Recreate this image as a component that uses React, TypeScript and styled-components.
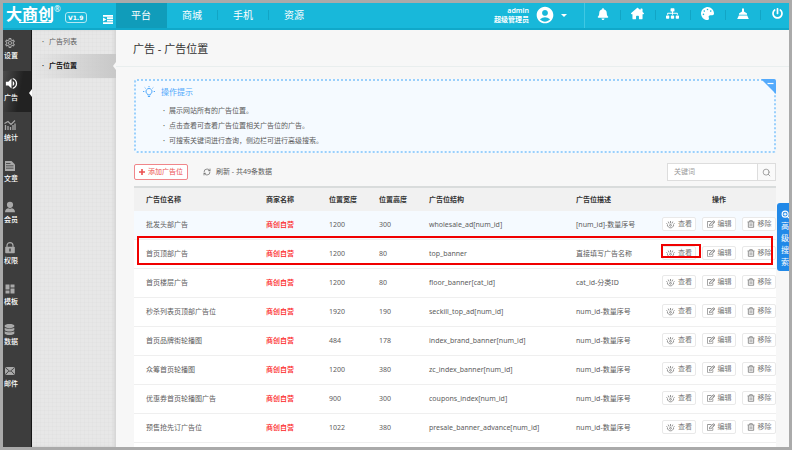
import React from "react";
import styled, { createGlobalStyle, css } from "styled-components";
import { FaBell, FaDatabase, FaPalette, FaPowerOff, FaRegEdit, FaSitemap } from "react-icons/fa";
import { FaHouseChimney } from "react-icons/fa6";
import { MdAccountCircle, MdDashboard, MdOutlineSettings, MdVolumeUp } from "react-icons/md";
import { RefreshCw, Search, ZoomIn } from "lucide-react";

const GlobalStyle = createGlobalStyle`
  *, *::before, *::after { box-sizing: border-box; }
  body {
    margin: 0;
    font-family: "Noto Sans", "Noto Sans CJK SC", sans-serif;
    font-size: 7px;
    line-height: 10px;
    color: #5c5c5c;
  }
  button, input { font: inherit; color: inherit; margin: 0; }
  button { padding: 0; border: 0; background: none; cursor: pointer; }
  a { color: inherit; text-decoration: none; }
  svg { display: block; flex: none; }
  ul { list-style: none; margin: 0; padding: 0; }
`;

const Frame = styled.div`
  display: flex;
  flex-direction: column;
  height: 100vh;
  overflow: hidden;
  border: 3px solid #aaaaaa;
  background: #f7f7f7;
`;

const Header = styled.header`
  display: flex;
  flex: none;
  height: 27px;
  overflow: hidden;
  color: #fff;
  background: #18b8da;
  border-bottom: 2px solid #10a8c9;
`;

const Brand = styled.div`
  display: flex;
  position: relative;
  width: 113px;
  padding: 0 3px;
`;

const LogoText = styled.span`
  font-size: 16px;
  line-height: 22px;
  font-weight: 700;
`;

const LogoStroke = styled.svg`
  position: absolute;
  left: 0;
  top: 0;
`;

const Registered = styled.sup`
  margin-top: 1px;
  font-size: 8px;
  line-height: 10px;
  vertical-align: baseline;
`;

const Version = styled.span`
  align-self: flex-start;
  margin: 9px 0 0 4px;
  width: 22px;
  height: 11px;
  border: 1px solid #b4e8f3;
  border-radius: 3px;
  font: bold 6px/9px "DejaVu Sans", sans-serif;
  text-align: center;
`;

const CollapseButton = styled.button`
  align-self: flex-end;
  margin: 0 0 4px auto;
`;

const Tabs = styled.nav`
  display: flex;
`;

const Tab = styled.a<{ $active?: boolean }>`
  width: 51px;
  padding-right: 1px;
  font-size: 10px;
  line-height: 24px;
  text-align: center;
  background: ${(p) => (p.$active ? "#109cba" : "transparent")};
  &:not(:first-child):not(:last-child) {
    background: linear-gradient(#12a5c5, #12a5c5) right 7px / 1px 10px no-repeat;
  }
`;

const Account = styled.button`
  display: flex;
  align-items: center;
  gap: 6px;
  margin-left: auto;
  padding: 0 17px 1px 0;
`;

const AccountName = styled.span`
  display: flex;
  flex-direction: column;
  text-align: right;
  line-height: 9px;
  font-weight: 600;
`;

const Tools = styled.div`
  display: flex;
  margin-right: -6px;
  border-left: 1px solid #3fc8e3;
`;

const Tool = styled.button`
  display: grid;
  place-items: center;
  width: 35px;
  padding-bottom: 4px;
  & + & {
    background: linear-gradient(#12a5c5, #12a5c5) left 7px / 1px 10px no-repeat;
  }
`;

const Body = styled.div`
  display: flex;
  flex: 1;
  min-height: 0;
`;

const SideNav = styled.nav`
  flex: none;
  width: 29px;
  background: #3d3d3d;
  border-right: 1px solid #161616;
`;

const SideLink = styled.a<{ $active?: boolean }>`
  display: flex;
  flex-direction: column;
  gap: 2px;
  position: relative;
  height: 41px;
  padding: 7px 0 0 1px;
  color: #fff;
  font-weight: 500;
  svg { color: ${(p) => (p.$active ? "#fff" : "#a9a9a9")}; }
  ${(p) =>
    p.$active &&
    css`
      padding-top: 5px;
      background: linear-gradient(100deg, #4a4a4a, #222 60%);
      &::after {
        content: "";
        position: absolute;
        right: -1px;
        top: 18px;
        border: 4px solid transparent;
        border-left-width: 0;
        border-right: 3px solid #fff;
      }
    `}
`;

const SubNav = styled.nav`
  flex: none;
  width: 84px;
  box-shadow: inset -2px 0 3px #d4d4d4;
  background:
    repeating-linear-gradient(90deg, #d8d8d833 0 1px, transparent 1px 4px),
    repeating-linear-gradient(#d8d8d833 0 1px, transparent 1px 4px),
    #e7e7e7;
`;

const SubLink = styled.a<{ $active?: boolean }>`
  display: flex;
  align-items: center;
  position: relative;
  height: 24px;
  padding-left: 10px;
  &::before { content: "·"; width: 7px; font-weight: 700; }
  ${(p) =>
    p.$active &&
    css`
      color: #111;
      font-weight: 700;
      background: linear-gradient(90deg, transparent, #c8c8c8);
      &::after {
        content: "";
        position: absolute;
        right: 0;
        border: 4px solid transparent;
        border-left-width: 0;
        border-right: 3px solid #f7f7f7;
      }
    `}
`;

const Main = styled.main`
  display: flex;
  flex-direction: column;
  flex: 1;
  min-width: 0;
  position: relative;
`;

const Title = styled.h1`
  margin: 0;
  padding: 1px 17px 0;
  border-bottom: 1px solid #e9eeee;
  color: #333;
  font-size: 11px;
  line-height: 35px;
  font-weight: 400;
`;

const Content = styled.div`
  display: flex;
  flex-direction: column;
  flex: 1;
  min-height: 0;
  padding: 12px 13px 0 18px;
`;

const Hint = styled.section`
  position: relative;
  padding: 4px 0 3px 7px;
  border: 2px dotted #9bd0fb;
  border-radius: 3px;
  background: #f5faff;
`;

const HintTitle = styled.h2`
  display: flex;
  align-items: center;
  gap: 6px;
  margin: 0 0 4px;
  color: #4fa8fb;
  font-size: 8px;
  line-height: 14px;
  font-weight: 400;
`;

const HintItem = styled.li`
  display: flex;
  padding-left: 20px;
  line-height: 15px;
  &::before { content: "·"; width: 6px; font-weight: 700; }
`;

const FoldButton = styled.button`
  position: absolute;
  right: -2px;
  top: -2px;
`;

const Toolbar = styled.div`
  display: flex;
  align-items: center;
  gap: 15px;
  margin: 10px 0 5px;
`;

const AddButton = styled.button`
  display: flex;
  align-items: center;
  justify-content: center;
  gap: 3px;
  width: 54px;
  height: 16px;
  border: 1px solid #f0868a;
  border-radius: 2px;
  background: #fff;
  color: #ec5151;
`;

const RefreshButton = styled.button`
  display: flex;
  align-items: center;
  gap: 5px;
`;

const SearchBox = styled.form`
  display: flex;
  width: 109px;
  height: 18px;
  margin-left: auto;
  border: 1px solid #ddd;
  background: #fff;
`;

const SearchInput = styled.input`
  flex: 1;
  min-width: 0;
  padding: 0 6px;
  border: 0;
  background: none;
  &::placeholder { color: #999; }
`;

const SearchButton = styled.button`
  display: grid;
  place-items: center;
  width: 18px;
  border-left: 1px solid #ddd;
  background: #fafafa;
  color: #888;
`;

const TableArea = styled.div`
  flex: 1;
  position: relative;
  background: #fff;
`;

const Table = styled.table`
  width: 100%;
  table-layout: fixed;
  border-collapse: separate;
  border-spacing: 0;
  border-top: 2px solid #d9dcdc;
`;

const Col = styled.col<{ $width?: number }>`
  width: ${(p) => (p.$width ? `${p.$width}px` : "auto")};
`;

const HeadCell = styled.th<{ $center?: boolean }>`
  height: 23px;
  padding: 0 0 0 ${(p) => (p.$center ? 0 : 12)}px;
  background: #f1f1f1;
  color: #333;
  font-weight: 700;
  text-align: ${(p) => (p.$center ? "center" : "left")};
`;

const Row = styled.tr<{ $hover?: boolean }>`
  background: ${(p) => (p.$hover ? "#f5faff" : "#fff")};
`;

const Cell = styled.td<{ $seller?: boolean }>`
  height: 29px;
  padding: 0 0 0 12px;
  border-bottom: 1px solid #efefef;
  white-space: nowrap;
  color: ${(p) => (p.$seller ? "#fc1c1c" : "#5c5c5c")};
  font-weight: ${(p) => (p.$seller ? 500 : 400)};
`;

const ActionCell = styled(Cell)`
  padding: 0;
`;

const Actions = styled.div`
  display: flex;
  gap: 6px;
  margin-top: -2px;
`;

const ActionButton = styled.button`
  display: flex;
  align-items: center;
  justify-content: center;
  gap: 3px;
  width: 34px;
  height: 14px;
  border: 1px solid #e9e9e9;
  border-radius: 2px;
  background: #fff;
  color: #777;
`;

const Mark = styled.div<{ $inner?: boolean }>`
  position: absolute;
  border: 2px solid #f00000;
  pointer-events: none;
  ${(p) =>
    p.$inner
      ? css`top: 58px; right: 75px; width: 40px; height: 14px;`
      : css`top: 50px; left: 3px; right: 3px; height: 29px;`}
`;

const AdvancedSearch = styled.button`
  display: flex;
  flex-direction: column;
  gap: 1px;
  position: absolute;
  right: 0;
  top: 173px;
  width: 12px;
  padding: 7px 0 4px 4px;
  border-radius: 3px 0 0 3px;
  background: #2189e8;
  color: #fff;
  font-size: 8px;
  line-height: 11px;
  overflow: hidden;
`;

const StatsIcon = () => (
  <svg width="12" height="12" viewBox="0 0 12 12" fill="none" stroke="currentColor">
    <path d="M1.5 6v5M4 7v4M6.500 8v3M9 6v5M11 4.500V11" strokeWidth="1.300" />
    <path d="M.5 4.500L4 2.500l3 3L11 1.500" strokeWidth="1.100" />
  </svg>
);
const ArticleIcon = () => (
  <svg width="12" height="12" viewBox="0 0 12 12">
    <path fill="currentColor" d="M1 1h6.500L11 4.500V11H1z" />
    <path stroke="#3d3d3d" strokeWidth=".8" d="M2 3.500h4.500M2 5.800h7.500M2 8.200h7.500" fill="none" />
  </svg>
);
const MemberIcon = () => (
  <svg width="12" height="12" viewBox="0 0 12 12" fill="currentColor">
    <path d="M6 .8c2 0 3.100 1.300 3.100 3S8 7.200 6 7.200 2.900 5.500 2.900 3.800 4 .8 6 .8zM1 11.200c0-2.500 1.700-3.900 3.500-4 .9.700 2.100.7 3 0 1.800.1 3.500 1.500 3.500 4z" />
  </svg>
);
const LockIcon = () => (
  <svg width="12" height="12" viewBox="0 0 12 12">
    <path d="M3 5V3.600a3 3 0 0 1 6 0V5" fill="none" stroke="currentColor" strokeWidth="1.200" />
    <rect x="1.200" y="4.800" width="9.600" height="6.500" rx=".8" fill="currentColor" />
    <path d="M6 6.500v3" stroke="#333" strokeWidth="1.300" />
  </svg>
);
const MailIcon = () => (
  <svg width="12" height="12" viewBox="0 0 12 12">
    <rect x="1" y="2" width="10" height="8" rx="2" fill="currentColor" />
    <path d="M2 3.200l4 3.300 4-3.300M2 9l2.800-3M10 9L7.200 6" fill="none" stroke="#3d3d3d" strokeWidth=".9" />
  </svg>
);
const CollapseIcon = () => (
  <svg width="10" height="9" viewBox="0 0 10 9">
    <path d="M0 .8h10M4 3.200H10M4 5.700H10M0 8.200h10" stroke="#fff" strokeWidth="1.800" />
    <path d="M0 2.400l3.500 2.100L0 6.600z" fill="#fff" />
  </svg>
);
const BroomIcon = () => (
  <svg width="12" height="12" viewBox="0 0 12 12" fill="#fff">
    <path d="M5 .5h2v3l3 2v1.300H2V5.500l3-2zM1.800 7.400h8.400L11.800 11H.2z" />
  </svg>
);
const BulbIcon = () => (
  <svg width="12" height="12" viewBox="0 0 12 12" fill="none" stroke="#4fa8fb" strokeWidth="1">
    <path d="M4.700 8.900V8.200a3 3 0 1 1 2.600 0v.7zM4.900 10.500h2.200M6 0v1.200M0 5.500h1.300M10.700 5.500H12M1.700 1.500l.9.900M10.300 1.500l-.9.900" />
  </svg>
);
const FoldIcon = () => (
  <svg width="15" height="15" viewBox="0 0 15 15">
    <path d="M0 0h13a2 2 0 0 1 2 2v13z" fill="#54aafc" />
    <path d="M6.500 4.500h6" stroke="#fff" strokeWidth="1.200" />
  </svg>
);
const PlusIcon = () => (
  <svg width="6" height="6" viewBox="0 0 6 6">
    <path d="M3 0v6M0 3h6" stroke="currentColor" strokeWidth="1.600" />
  </svg>
);
const ViewIcon = () => (
  <svg width="9" height="9" viewBox="0 0 9 9" fill="none" stroke="currentColor" strokeWidth=".8">
    <path d="M1.200 5C2 7 3 7.800 4.500 7.800S7 7 7.800 5M4.500 1v2.200M2.200 1.600l.9 1.900M6.800 1.600l-.9 1.900M.4 3.400l1.400 1.100M8.600 3.400L7.200 4.500" />
    <circle cx="4.500" cy="5.300" r=".9" />
  </svg>
);
const TrashIcon = () => (
  <svg width="8" height="8" viewBox="0 0 9 9" fill="none" stroke="currentColor" strokeWidth=".9">
    <path d="M.6 2.200h7.800M3 2V.8h3V2M1.500 2.400v5.800h6V2.400M3.500 3.700v3.200M5.500 3.700v3.200" />
  </svg>
);

const sideItems = [
  { label: "设置", icon: <MdOutlineSettings size={12} /> },
  { label: "广告", icon: <MdVolumeUp size={15} />, active: true },
  { label: "统计", icon: <StatsIcon /> },
  { label: "文章", icon: <ArticleIcon /> },
  { label: "会员", icon: <MemberIcon /> },
  { label: "权限", icon: <LockIcon /> },
  { label: "模板", icon: <MdDashboard size={12} /> },
  { label: "数据", icon: <FaDatabase size={11} /> },
  { label: "邮件", icon: <MailIcon /> },
];

const tools = [
  { label: "消息", icon: <FaBell size={12} /> },
  { label: "首页", icon: <FaHouseChimney size={13} /> },
  { label: "站点地图", icon: <FaSitemap size={13} /> },
  { label: "主题", icon: <FaPalette size={13} /> },
  { label: "清除缓存", icon: <BroomIcon /> },
  { label: "退出", icon: <FaPowerOff size={11} /> },
];

const hints = [
  "展示网站所有的广告位置。",
  "点击查看可查看广告位置相关广告位的广告。",
  "可搜索关键词进行查询，侧边栏可进行高级搜索。",
];

const columns = [
  { label: "广告位名称", width: 120 },
  { label: "商家名称", width: 63 },
  { label: "位置宽度", width: 50 },
  { label: "位置高度", width: 50 },
  { label: "广告位结构", width: 147 },
  { label: "广告位描述" },
  { label: "操作", width: 114 },
];

const rows = [
  ["批发头部广告", 1200, 300, "wholesale_ad[num_id]", "[num_id]-数量序号"],
  ["首页顶部广告", 1200, 80, "top_banner", "直接填写广告名称"],
  ["首页楼层广告", 1200, 80, "floor_banner[cat_id]", "cat_id-分类ID"],
  ["秒杀列表页顶部广告位", 1920, 190, "seckill_top_ad[num_id]", "num_id-数量序号"],
  ["首页品牌街轮播图", 484, 178, "index_brand_banner[num_id]", "num_id-数量序号"],
  ["众筹首页轮播图", 1200, 380, "zc_index_banner[num_id]", "num_id-数量序号"],
  ["优惠券首页轮播图广告", 900, 300, "coupons_index[num_id]", "num_id-数量序号"],
  ["预售抢先订广告位", 1022, 380, "presale_banner_advance[num_id]", "num_id-数量序号"],
];

export default function App() {
  return (
    <>
      <GlobalStyle />
      <Frame>
        <Header>
          <Brand>
            <LogoText>大商创</LogoText>
            <LogoStroke width="52" height="22" viewBox="0 0 52 22" fill="none" stroke="#fff" strokeWidth="1.200">
              <path d="M16 19.500h31q2 0 2-2V15" />
            </LogoStroke>
            <Registered>®</Registered>
            <Version>V1.9</Version>
            <CollapseButton aria-label="收起菜单"><CollapseIcon /></CollapseButton>
          </Brand>
          <Tabs>
            {["平台", "商城", "手机", "资源"].map((t, i) => (
              <Tab href="#" key={t} $active={i === 0}>{t}</Tab>
            ))}
          </Tabs>
          <Account>
            <AccountName>
              <span>admin</span>
              <span>超级管理员</span>
            </AccountName>
            <MdAccountCircle size={20} />
            <svg width="6" height="3" viewBox="0 0 6 3"><path d="M0 0h6L3 3z" fill="#fff" /></svg>
          </Account>
          <Tools>
            {tools.map((t) => (
              <Tool key={t.label} aria-label={t.label}>{t.icon}</Tool>
            ))}
          </Tools>
        </Header>
        <Body>
          <SideNav>
            {sideItems.map((s) => (
              <SideLink href="#" key={s.label} $active={s.active}>
                {s.icon}
                {s.label}
              </SideLink>
            ))}
          </SideNav>
          <SubNav>
            <SubLink href="#">广告列表</SubLink>
            <SubLink href="#" $active>广告位置</SubLink>
          </SubNav>
          <Main>
            <Title>广告 - 广告位置</Title>
            <Content>
              <Hint>
                <HintTitle><BulbIcon />操作提示</HintTitle>
                <ul>
                  {hints.map((h) => <HintItem key={h}>{h}</HintItem>)}
                </ul>
                <FoldButton aria-label="收起提示"><FoldIcon /></FoldButton>
              </Hint>
              <Toolbar>
                <AddButton><PlusIcon />添加广告位</AddButton>
                <RefreshButton><RefreshCw size={8} />刷新 - 共49条数据</RefreshButton>
                <SearchBox>
                  <SearchInput placeholder="关键词" aria-label="关键词" />
                  <SearchButton type="button" aria-label="搜索"><Search size={9} /></SearchButton>
                </SearchBox>
              </Toolbar>
              <TableArea>
                <Table>
                  <colgroup>
                    {columns.map((c) => <Col key={c.label} $width={c.width} />)}
                  </colgroup>
                  <thead>
                    <tr>
                      {columns.map((c) => (
                        <HeadCell key={c.label} $center={c.label === "操作"}>{c.label}</HeadCell>
                      ))}
                    </tr>
                  </thead>
                  <tbody>
                    {rows.map(([name, w, h, code, desc], i) => (
                      <Row key={name} $hover={i === 0}>
                        <Cell>{name}</Cell>
                        <Cell $seller>商创自营</Cell>
                        <Cell>{w}</Cell>
                        <Cell>{h}</Cell>
                        <Cell>{code}</Cell>
                        <Cell>{desc}</Cell>
                        <ActionCell>
                          <Actions>
                            <ActionButton><ViewIcon />查看</ActionButton>
                            <ActionButton><FaRegEdit size={8} />编辑</ActionButton>
                            <ActionButton><TrashIcon />移除</ActionButton>
                          </Actions>
                        </ActionCell>
                      </Row>
                    ))}
                  </tbody>
                </Table>
                <Mark />
                <Mark $inner />
              </TableArea>
            </Content>
            <AdvancedSearch aria-label="高级搜索">
              <ZoomIn size={9} strokeWidth={3} />
              {[..."高级搜索"].map((c) => <span key={c}>{c}</span>)}
            </AdvancedSearch>
          </Main>
        </Body>
      </Frame>
    </>
  );
}
